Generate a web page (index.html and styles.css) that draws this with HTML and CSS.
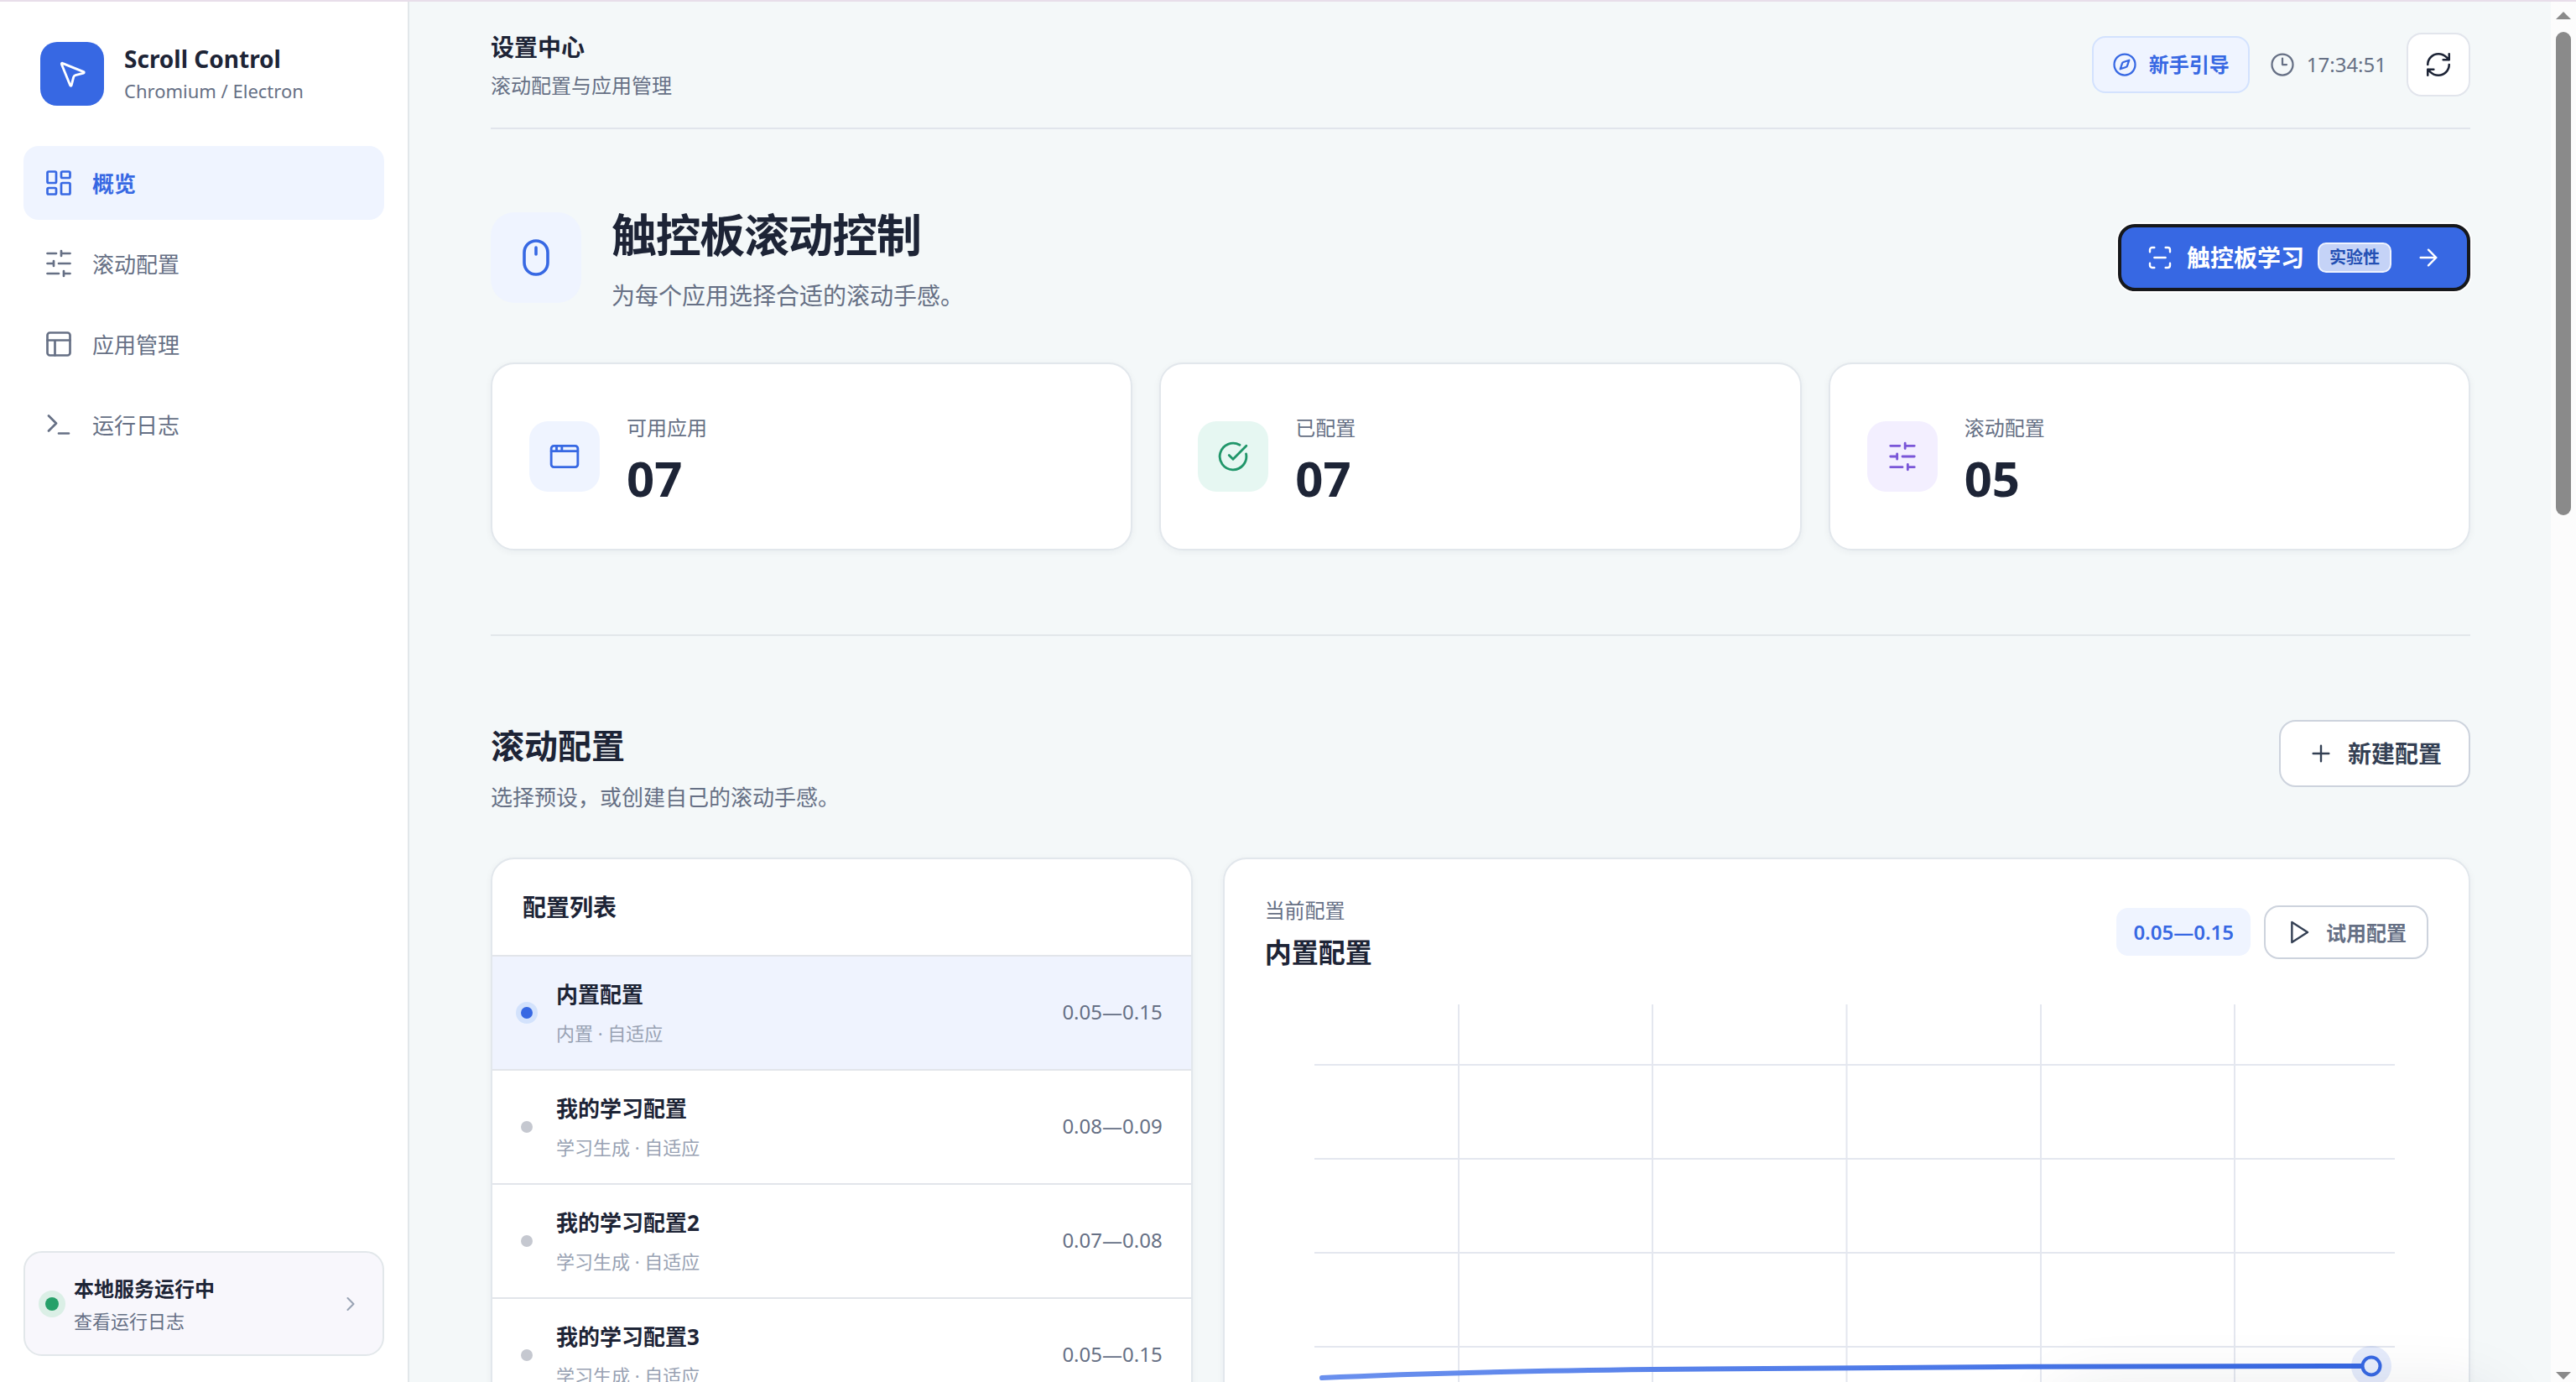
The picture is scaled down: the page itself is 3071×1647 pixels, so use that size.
FILE: index.html
```html
<!DOCTYPE html>
<html lang="zh-CN">
<head>
    <meta charset="UTF-8">
    <meta name="viewport" content="width=device-width, initial-scale=1.0">
    <title>Scroll Control</title>
    <link rel="stylesheet" href="styles.css">
</head>
<body>
    <div class="app">
        <aside class="sidebar">
            <div class="brand">
                <div class="brand-logo">
                    <svg class="icon icon-38" viewBox="0 0 24 24"><path d="M4.037 4.688a.495.495 0 0 1 .651-.651l16 6.5a.5.5 0 0 1-.063.947l-6.124 1.58a2 2 0 0 0-1.438 1.435l-1.579 6.126a.5.5 0 0 1-.947.063z"/></svg>
                </div>
                <div>
                    <div class="brand-name">Scroll Control</div>
                    <div class="brand-sub">Chromium / Electron</div>
                </div>
            </div>
            <nav class="nav">
                <a class="nav-item active">
                    <svg class="icon icon-36" viewBox="0 0 24 24"><rect x="3" y="3" width="7" height="9" rx="1"/><rect x="14" y="3" width="7" height="5" rx="1"/><rect x="14" y="12" width="7" height="9" rx="1"/><rect x="3" y="16" width="7" height="5" rx="1"/></svg>
                    <span>概览</span>
                </a>
                <a class="nav-item">
                    <svg class="icon icon-36" viewBox="0 0 24 24"><path d="M21 4h-7M10 4H3M21 12h-9M8 12H3M21 20h-5M12 20H3M14 2v4M8 10v4M16 18v4"/></svg>
                    <span>滚动配置</span>
                </a>
                <a class="nav-item">
                    <svg class="icon icon-36" viewBox="0 0 24 24"><rect x="3" y="3" width="18" height="18" rx="2"/><path d="M3 9h18M9 21V9"/></svg>
                    <span>应用管理</span>
                </a>
                <a class="nav-item">
                    <svg class="icon icon-36" viewBox="0 0 24 24"><path d="m4 17 6-6-6-6M12 19h8"/></svg>
                    <span>运行日志</span>
                </a>
            </nav>
            <div class="service">
                <span class="service-dot"></span>
                <div class="service-text">
                    <div class="service-title">本地服务运行中</div>
                    <div class="service-sub">查看运行日志</div>
                </div>
                <svg class="icon icon-28" viewBox="0 0 24 24"><path d="m9 18 6-6-6-6"/></svg>
            </div>
        </aside>

        <main class="main">
            <div class="content">
                <header class="topbar">
                    <div>
                        <div class="topbar-title">设置中心</div>
                        <div class="topbar-sub">滚动配置与应用管理</div>
                    </div>
                    <div class="topbar-actions">
                        <button class="guide-btn">
                            <svg class="icon icon-30" viewBox="0 0 24 24"><circle cx="12" cy="12" r="10"/><path d="m16.24 7.76-1.804 5.411a2 2 0 0 1-1.265 1.265L7.76 16.24l1.804-5.411a2 2 0 0 1 1.265-1.265z"/></svg>
                            新手引导
                        </button>
                        <div class="clock">
                            <svg class="icon icon-30" viewBox="0 0 24 24"><circle cx="12" cy="12" r="10"/><path d="M12 6v6h4"/></svg>
                            <span>17:34:51</span>
                        </div>
                        <button class="refresh-btn">
                            <svg class="icon icon-34" viewBox="0 0 24 24"><path d="M3 12a9 9 0 0 1 9-9 9.75 9.75 0 0 1 6.74 2.74L21 8M21 3v5h-5M21 12a9 9 0 0 1-9 9 9.75 9.75 0 0 1-6.74-2.74L3 16M8 16H3v5"/></svg>
                        </button>
                    </div>
                </header>

                <section class="overview">
                    <div class="hero">
                        <div class="hero-icon">
                            <svg class="icon icon-48" viewBox="0 0 24 24"><rect x="5" y="2" width="14" height="20" rx="7"/><path d="M12 6v4"/></svg>
                        </div>
                        <div class="hero-text">
                            <h1>触控板滚动控制</h1>
                            <p>为每个应用选择合适的滚动手感。</p>
                        </div>
                        <button class="btn learn-btn">
                            <svg class="icon icon-32" viewBox="0 0 24 24"><path d="M3 7V5a2 2 0 0 1 2-2h2M17 3h2a2 2 0 0 1 2 2v2M21 17v2a2 2 0 0 1-2 2h-2M7 21H5a2 2 0 0 1-2-2v-2M7 12h10"/></svg>
                            <span>触控板学习</span>
                            <span class="badge">实验性</span>
                            <svg class="icon icon-32 arrow" viewBox="0 0 24 24"><path d="M5 12h14M12 5l7 7-7 7"/></svg>
                        </button>
                    </div>
                    <div class="stats">
                        <div class="card stat">
                            <div class="stat-icon blue">
                                <svg class="icon icon-38" viewBox="0 0 24 24"><rect x="2" y="4" width="20" height="16" rx="2"/><path d="M10 4v4M2 8h20M6 4v4"/></svg>
                            </div>
                            <div>
                                <div class="stat-label">可用应用</div>
                                <div class="stat-value">07</div>
                            </div>
                        </div>
                        <div class="card stat">
                            <div class="stat-icon green">
                                <svg class="icon icon-38" viewBox="0 0 24 24"><path d="M21.801 10A10 10 0 1 1 17 3.335"/><path d="m9 11 3 3L22 4"/></svg>
                            </div>
                            <div>
                                <div class="stat-label">已配置</div>
                                <div class="stat-value">07</div>
                            </div>
                        </div>
                        <div class="card stat">
                            <div class="stat-icon purple">
                                <svg class="icon icon-38" viewBox="0 0 24 24"><path d="M21 4h-7M10 4H3M21 12h-9M8 12H3M21 20h-5M12 20H3M14 2v4M8 10v4M16 18v4"/></svg>
                            </div>
                            <div>
                                <div class="stat-label">滚动配置</div>
                                <div class="stat-value">05</div>
                            </div>
                        </div>
                    </div>
                </section>

                <section class="profiles">
                    <div class="section-head">
                        <div>
                            <h2>滚动配置</h2>
                            <p>选择预设，或创建自己的滚动手感。</p>
                        </div>
                        <button class="btn new-btn">
                            <svg class="icon icon-32" viewBox="0 0 24 24"><path d="M5 12h14M12 5v14"/></svg>
                            <span>新建配置</span>
                        </button>
                    </div>
                    <div class="panels">
                        <div class="card list">
                            <div class="list-head">配置列表</div>
                            <div class="row selected">
                                <span class="row-dot"></span>
                                <div class="row-text">
                                    <div class="row-name">内置配置</div>
                                    <div class="row-meta">内置 · 自适应</div>
                                </div>
                                <span class="row-range">0.05—0.15</span>
                            </div>
                            <div class="row">
                                <span class="row-dot"></span>
                                <div class="row-text">
                                    <div class="row-name">我的学习配置</div>
                                    <div class="row-meta">学习生成 · 自适应</div>
                                </div>
                                <span class="row-range">0.08—0.09</span>
                            </div>
                            <div class="row">
                                <span class="row-dot"></span>
                                <div class="row-text">
                                    <div class="row-name">我的学习配置2</div>
                                    <div class="row-meta">学习生成 · 自适应</div>
                                </div>
                                <span class="row-range">0.07—0.08</span>
                            </div>
                            <div class="row">
                                <span class="row-dot"></span>
                                <div class="row-text">
                                    <div class="row-name">我的学习配置3</div>
                                    <div class="row-meta">学习生成 · 自适应</div>
                                </div>
                                <span class="row-range">0.05—0.15</span>
                            </div>
                        </div>

                        <div class="card detail">
                            <div class="detail-head">
                                <div>
                                    <div class="detail-label">当前配置</div>
                                    <div class="detail-name">内置配置</div>
                                </div>
                                <div class="detail-actions">
                                    <span class="chip">0.05—0.15</span>
                                    <button class="try-btn">
                                        <svg class="icon icon-32" viewBox="0 0 24 24"><path d="M5.500 3l14 9-14 9z"/></svg>
                                        <span>试用配置</span>
                                    </button>
                                </div>
                            </div>
                            <svg class="chart" viewBox="0 0 1386 560" width="1386" height="560">
                                <defs>
                                    <linearGradient id="curve" gradientUnits="userSpaceOnUse" x1="66" y1="0" x2="1318" y2="0">
                                        <stop offset="0" stop-color="#6a90ee"/>
                                        <stop offset="1" stop-color="#3768e3"/>
                                    </linearGradient>
                                </defs>
                                <path class="grid" d="M59 73H1347M59 185H1347M59 297H1347M59 409H1347M59 521H1347"/>
                                <path class="grid" d="M231 1V560M462 1V560M693.500 1V560M925 1V560M1156 1V560"/>
                                <path class="line" stroke="url(#curve)" d="M68 446C180 440.500 330 437.500 462 436S760 433 925 432.800S1200 432 1319 432"/>
                                <circle class="halo" cx="1319" cy="432" r="24"/>
                                <circle class="point" cx="1319" cy="432" r="10.500"/>
                            </svg>
                        </div>
                    </div>
                </section>
            </div>
        </main>

        <div class="scrollbar">
            <svg width="18" height="9" viewBox="0 0 18 9"><path d="M9 0l9 9H0z"/></svg>
            <div class="thumb"></div>
            <svg class="down" width="18" height="9" viewBox="0 0 18 9"><path d="M0 0h18L9 9z"/></svg>
        </div>
    </div>
    <div class="toast"></div>
</body>
</html>
```

FILE: styles.css
```css
* {
    box-sizing: border-box;
}
body {
    margin: 0;
    height: 100vh;
    overflow: hidden;
    font-family: "Noto Sans", "Noto Sans CJK SC", sans-serif;
    font-size: 26px;
    color: #1d2436;
    background-color: #f4f8f9;
}
h1, h2, p {
    margin: 0;
}
button {
    font-family: inherit;
    margin: 0;
    padding: 0;
    cursor: pointer;
}
.app {
    display: flex;
    height: 100vh;
    border-top: 2px solid #e8deea;
}

/* icons */
.icon {
    display: block;
    flex: none;
    fill: none;
    stroke: currentColor;
    stroke-width: 1.8;
    stroke-linecap: round;
    stroke-linejoin: round;
}
.icon-28 { width: 28px; height: 28px; }
.icon-30 { width: 30px; height: 30px; }
.icon-32 { width: 32px; height: 32px; }
.icon-34 { width: 34px; height: 34px; }
.icon-36 { width: 36px; height: 36px; }
.icon-38 { width: 38px; height: 38px; }
.icon-48 { width: 48px; height: 48px; }

/* sidebar */
.sidebar {
    flex: none;
    width: 488px;
    display: flex;
    flex-direction: column;
    padding: 48px 28px 31px;
    background-color: #fff;
    border-right: 2px solid #e2e7ea;
}
.brand {
    display: flex;
    align-items: center;
    gap: 24px;
    height: 76px;
    padding-left: 20px;
    margin-bottom: 48px;
}
.brand-logo {
    display: flex;
    align-items: center;
    justify-content: center;
    width: 76px;
    height: 76px;
    border-radius: 20px;
    color: #fff;
    background-color: #3768e3;
}
.brand-name {
    font-size: 28px;
    line-height: 36px;
    font-weight: 700;
}
.brand-sub {
    margin-top: 4px;
    font-size: 22px;
    line-height: 32px;
    color: #667085;
}
.nav {
    display: flex;
    flex-direction: column;
    gap: 8px;
}
.nav-item {
    display: flex;
    align-items: center;
    gap: 22px;
    height: 88px;
    padding: 0 24px;
    border-radius: 18px;
    color: #667085;
}
.nav-item.active {
    color: #3768e3;
    font-weight: 700;
    background-color: #eff4ff;
}
.service {
    display: flex;
    align-items: center;
    height: 125px;
    margin-top: auto;
    padding: 0 24px;
    border: 2px solid #e2e7ea;
    border-radius: 22px;
    background-color: #f8f7fc;
    color: #98a2b3;
}
.service-dot {
    width: 16px;
    height: 16px;
    border-radius: 50%;
    background-color: #26a069;
    box-shadow: 0 0 0 8px #dbefe6;
}
.service-text {
    flex: 1;
    margin-left: 18px;
    padding-bottom: 3px;
}
.service-title {
    font-size: 24px;
    line-height: 40px;
    font-weight: 700;
    color: #1d2436;
}
.service-sub {
    margin-top: 3px;
    font-size: 22px;
    line-height: 30px;
    color: #667085;
}

/* main */
.main {
    flex: 1;
    min-width: 0;
    overflow: hidden;
    padding-left: 1px;
}
.content {
    width: 2360px;
    margin: 0 auto;
}
.topbar {
    display: flex;
    align-items: center;
    justify-content: space-between;
    height: 152px;
    border-bottom: 2px solid #e1e5ec;
}
.topbar-title {
    font-size: 28px;
    line-height: 42px;
    font-weight: 700;
}
.topbar-sub {
    margin-top: 8px;
    font-size: 24px;
    line-height: 34px;
    color: #667085;
}
.topbar-actions {
    display: flex;
    align-items: center;
    gap: 24px;
}
.guide-btn {
    display: flex;
    align-items: center;
    gap: 14px;
    height: 68px;
    padding: 0 22px;
    border: 2px solid #d3e2fe;
    border-radius: 16px;
    font-size: 24px;
    line-height: 32px;
    font-weight: 700;
    color: #3768e3;
    background-color: #eff4ff;
}
.clock {
    display: flex;
    align-items: center;
    gap: 14px;
    font-size: 24px;
    line-height: 32px;
    color: #667085;
}
.refresh-btn {
    display: flex;
    align-items: center;
    justify-content: center;
    width: 76px;
    height: 76px;
    border: 2px solid #e2e5ec;
    border-radius: 18px;
    color: #1d2436;
    background-color: #fff;
}

/* overview */
.overview {
    padding: 86px 0 100px;
    border-bottom: 2px solid #e2e7ea;
}
.hero {
    display: flex;
    align-items: center;
    margin-bottom: 58px;
}
.hero-icon {
    display: flex;
    align-items: center;
    justify-content: center;
    width: 108px;
    height: 108px;
    border-radius: 28px;
    color: #3768e3;
    background-color: #eff4ff;
}
.hero-text {
    flex: 1;
    margin-left: 36px;
}
.hero h1 {
    font-size: 54px;
    line-height: 80px;
    font-weight: 700;
    letter-spacing: -0.025em;
}
.hero p {
    margin-top: 11px;
    margin-bottom: 1px;
    font-size: 28px;
    line-height: 42px;
    color: #667085;
}
.btn {
    display: flex;
    align-items: center;
    gap: 16px;
    height: 80px;
    border-radius: 20px;
    font-size: 28px;
    line-height: 38px;
    font-weight: 700;
}
.learn-btn {
    padding: 0 30px;
    border: 4px solid #16181c;
    color: #fff;
    background-color: #3768e3;
    box-shadow: 0 0 0 2px #fff;
}
.learn-btn .arrow {
    margin-left: 12px;
}
.badge {
    height: 36px;
    padding: 0 12px;
    border: 2px solid #f0f4fe;
    border-radius: 10px;
    font-size: 20px;
    line-height: 31px;
    color: #2450b4;
    background-color: #c5d3f7;
}
.card {
    border: 2px solid #e2e7ec;
    border-radius: 28px;
    background-color: #fff;
    box-shadow: 0 2px 8px rgba(29, 36, 54, 0.05);
}
.stats {
    display: grid;
    grid-template-columns: repeat(3, 1fr);
    gap: 32px;
}
.stat {
    display: flex;
    align-items: center;
    gap: 32px;
    height: 224px;
    padding: 0 44px;
}
.stat-icon {
    display: flex;
    align-items: center;
    justify-content: center;
    width: 84px;
    height: 84px;
    border-radius: 22px;
}
.stat-icon.blue {
    color: #3768e3;
    background-color: #eff4ff;
}
.stat-icon.green {
    color: #20966a;
    background-color: #e6f7f2;
}
.stat-icon.purple {
    color: #7a56d8;
    background-color: #f3efff;
}
.stat-label {
    font-size: 24px;
    line-height: 40px;
    color: #667085;
}
.stat-value {
    margin-top: 12px;
    font-size: 58px;
    line-height: 56px;
    font-weight: 700;
}

/* profiles */
.profiles {
    padding-top: 100px;
}
.section-head {
    display: flex;
    align-items: flex-start;
    justify-content: space-between;
    margin-bottom: 50px;
}
.section-head h2 {
    font-size: 40px;
    line-height: 62px;
    font-weight: 700;
}
.section-head p {
    margin-top: 8px;
    line-height: 44px;
    color: #667085;
}
.new-btn {
    padding: 0 32px;
    border: 2px solid #cdd3dd;
    color: #344054;
    background-color: #fff;
}
.panels {
    display: grid;
    grid-template-columns: 9fr 16fr;
    gap: 36px;
}
.list {
    overflow: hidden;
}
.list-head {
    height: 116px;
    padding: 0 36px;
    border-bottom: 2px solid #e2e5ea;
    font-size: 28px;
    line-height: 114px;
    font-weight: 700;
}
.row {
    display: flex;
    align-items: center;
    height: 136px;
    padding: 0 34px;
    border-bottom: 2px solid #e2e5ea;
}
.row.selected {
    background-color: #eff3fe;
}
.row-dot {
    width: 14px;
    height: 14px;
    border-radius: 50%;
    background-color: #c5c8d0;
}
.row.selected .row-dot {
    background-color: #3768e3;
    box-shadow: 0 0 0 6px #d3e2fc;
}
.row-text {
    flex: 1;
    margin-left: 28px;
    padding-bottom: 2px;
}
.row-name {
    line-height: 40px;
    font-weight: 700;
}
.row-meta {
    margin-top: 10px;
    font-size: 22px;
    line-height: 32px;
    color: #98a2b3;
}
.row-range {
    padding-bottom: 2px;
    font-size: 24px;
    line-height: 32px;
    color: #667085;
}
.detail {
    padding: 41px 48px;
}
.detail-head {
    display: flex;
    align-items: center;
    justify-content: space-between;
    height: 91px;
    margin-bottom: 40px;
}
.detail-label {
    font-size: 24px;
    line-height: 40px;
    color: #667085;
}
.detail-name {
    margin-top: 8px;
    font-size: 32px;
    line-height: 43px;
    font-weight: 700;
}
.detail-actions {
    display: flex;
    align-items: center;
    gap: 16px;
}
.chip {
    height: 57px;
    padding: 0 20px;
    border-radius: 14px;
    font-size: 24px;
    line-height: 57px;
    font-weight: 600;
    color: #3768e3;
    background-color: #eff4ff;
}
.try-btn {
    display: flex;
    align-items: center;
    gap: 16px;
    height: 64px;
    padding: 0 24px;
    border: 2px solid #cdd3dd;
    border-radius: 18px;
    font-size: 24px;
    font-weight: 700;
    color: #344054;
    background-color: #fff;
}
.try-btn span {
    color: #667085;
}
.chart {
    display: block;
}
.chart .grid {
    fill: none;
    stroke: #e4e7ef;
    stroke-width: 2;
}
.chart .line {
    fill: none;
    stroke-width: 6;
    stroke-linecap: round;
}
.chart .halo {
    fill: #3768e3;
    fill-opacity: 0.13;
}
.chart .point {
    fill: #e8eefc;
    stroke: #3768e3;
    stroke-width: 4;
}

/* scrollbar */
.scrollbar {
    flex: none;
    display: flex;
    flex-direction: column;
    align-items: center;
    width: 30px;
    padding: 12px 0 3px;
    background-color: #fcfcfc;
    position: relative;
    z-index: 2;
}
.scrollbar svg {
    flex: none;
    fill: #8a8a8a;
}
.thumb {
    width: 18px;
    height: 576px;
    margin-top: 15px;
    border-radius: 9px;
    background-color: #8a8a8a;
}
.scrollbar .down {
    margin-top: auto;
}

/* hidden below the window edge, only its shadow shows */
.toast {
    position: fixed;
    right: 96px;
    bottom: -123px;
    width: 520px;
    height: 110px;
    border-radius: 24px;
    box-shadow: 0 0 80px rgba(29, 36, 54, 0.11);
}
```
